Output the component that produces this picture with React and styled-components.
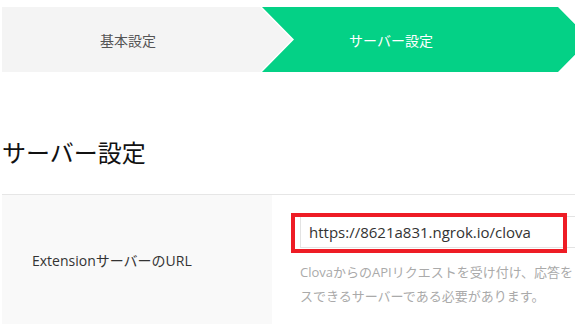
import styled, { createGlobalStyle } from 'styled-components';

const GlobalStyle = createGlobalStyle`
  html, body {
    margin: 0;
    padding: 0;
    overflow: hidden;
    background: #fff;
  }
  body {
    font-family: "Open Sans", "Noto Sans CJK JP", sans-serif;
    color: #333;
  }
`;

const App = () => {
  return (
    <>
      <GlobalStyle />
      <Page>
        <Stepper>
          <Step>基本設定</Step>
          <Step $active>サーバー設定</Step>
        </Stepper>

        <SectionTitle>サーバー設定</SectionTitle>

        <FormTable>
          <LabelCell>ExtensionサーバーのURL</LabelCell>
          <ValueCell>
            <InputWrap>
              <UrlInput defaultValue="https://8621a831.ngrok.io/clova" />
              <Highlight />
            </InputWrap>
            <HelpText>
              ClovaからのAPIリクエストを受け付け、応答をレスポン
              <br />
              スできるサーバーである必要があります。
            </HelpText>
          </ValueCell>
        </FormTable>
      </Page>
    </>
  );
};

export default App;

const Page = styled.div`
  width: 760px;
  padding: 7px 0 0 2px;
`;

const Stepper = styled.div`
  display: flex;
  height: 65px;
`;

const Step = styled.div`
  display: flex;
  align-items: center;
  justify-content: center;
  height: 100%;
  font-size: 14px;
  width: ${({ $active }) => ($active ? '328px' : '290px')};
  margin-left: ${({ $active }) => ($active ? '-30px' : '0')};
  padding: ${({ $active }) => ($active ? '0 102px 0 32px' : '0 38px 0 0')};
  box-sizing: border-box;
  background: ${({ $active }) => ($active ? '#04d186' : '#f4f4f4')};
  color: ${({ $active }) => ($active ? '#fff' : '#555')};
  clip-path: ${({ $active }) =>
    $active
      ? 'polygon(0 0, calc(100% - 32px) 0, 100% 50%, calc(100% - 32px) 100%, 0 100%, 32px 50%)'
      : 'polygon(0 0, calc(100% - 32px) 0, 100% 50%, calc(100% - 32px) 100%, 0 100%)'};
`;

const SectionTitle = styled.h2`
  margin: 63px 0 23px;
  font-size: 24px;
  line-height: 36px;
  font-weight: 400;
  color: #111;
`;

const FormTable = styled.div`
  display: grid;
  grid-template-columns: 270px 1fr;
  border-top: 1px solid #e6e6e6;
`;

const LabelCell = styled.div`
  display: flex;
  align-items: center;
  padding-left: 30px;
  background: #f9f9f9;
  font-size: 14px;
  color: #333;
`;

const ValueCell = styled.div`
  padding: 21px 0 16px 28px;
`;

const InputWrap = styled.div`
  position: relative;
  width: 420px;
`;

const UrlInput = styled.input`
  display: block;
  box-sizing: border-box;
  width: 100%;
  height: 32px;
  padding: 0 8px;
  border: 1px solid #e3e3e3;
  font-family: "Open Sans", "Noto Sans CJK JP", sans-serif;
  font-size: 15px;
  color: #333;
  outline: none;
`;

const Highlight = styled.div`
  position: absolute;
  left: -9px;
  top: -3px;
  width: 276px;
  height: 40px;
  box-sizing: border-box;
  border: 4px solid #ee1c25;
  pointer-events: none;
`;

const HelpText = styled.p`
  margin: 12px 0 0;
  font-size: 13px;
  line-height: 24px;
  color: #aaa;
`;
